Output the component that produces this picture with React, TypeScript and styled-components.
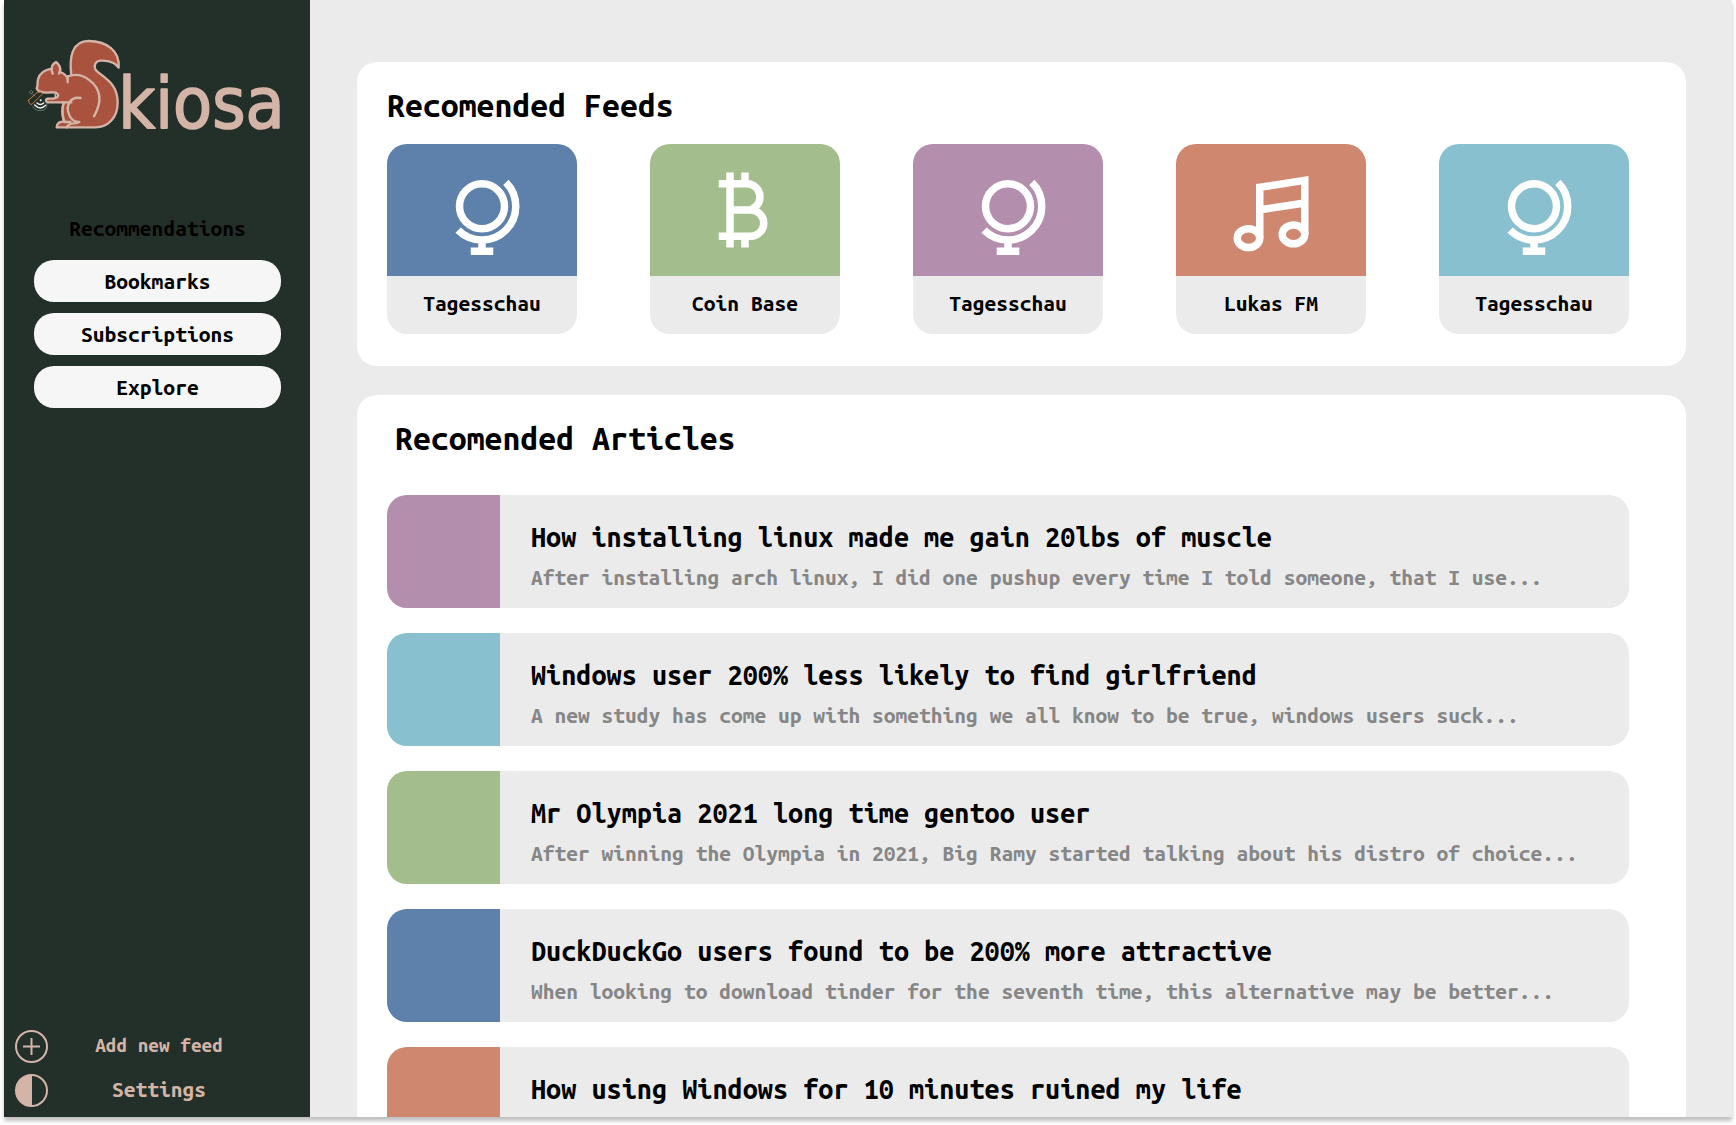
import React from "react";
import styled, { createGlobalStyle } from "styled-components";

const color = {
  sidebar: "#23302a",
  blush: "#d5b4a8",
  rust: "#a9533f",
  surface: "#ebebeb",
  blue: "#5e81ac",
  green: "#a3be8c",
  purple: "#b48ead",
  orange: "#d08770",
  cyan: "#88c0d0",
};

const GlobalStyle = createGlobalStyle`
  *, *::before, *::after { box-sizing: border-box; }
  body {
    margin: 0;
    background: #fff;
    color: #000;
    font-family: "Ubuntu Mono", "DejaVu Sans Mono", monospace;
    font-weight: 700;
  }
  a { color: inherit; text-decoration: none; }
`;

const Frame = styled.div`
  display: flex;
  height: calc(100vh - 8px);
  margin: 0 4px 8px;
  background: ${color.surface};
  box-shadow: 0 4px 4px rgba(0, 0, 0, 0.25);
  overflow: hidden;
`;

const Sidebar = styled.aside`
  display: flex;
  flex: 0 0 306px;
  flex-direction: column;
  padding: 30px 0 5px;
  background: ${color.sidebar};
`;

const LogoLink = styled.a`
  display: block;
  height: 120px;
  padding-left: 16px;
`;

const Nav = styled.nav`
  display: flex;
  flex-direction: column;
  gap: 11px;
  margin-top: 57px;
  padding: 0 29px 0 30px;
`;

const NavButton = styled.button<{ $current?: boolean }>`
  height: 42px;
  padding: 0;
  border: 0;
  border-radius: 20px;
  background: ${(p) => (p.$current ? "transparent" : "#f6f6f6")};
  color: #000;
  font: inherit;
  font-size: 21px;
  cursor: pointer;
`;

const Tools = styled.div`
  display: flex;
  flex-direction: column;
  margin-top: auto;
`;

const ToolButton = styled.button<{ $size: number }>`
  display: flex;
  align-items: center;
  height: 44px;
  padding: 0 38px 0 11px;
  border: 0;
  background: none;
  color: ${color.blush};
  font: inherit;
  font-size: ${(p) => p.$size}px;
  cursor: pointer;
`;

const ToolLabel = styled.span`
  flex: 1;
  padding: 0 2px 2px 0;
  text-align: center;
`;

const Main = styled.main`
  display: flex;
  flex: 1;
  flex-direction: column;
  gap: 29px;
  min-width: 0;
  padding: 62px 46px 0 47px;
  overflow: hidden;
`;

const Panel = styled.section`
  flex-shrink: 0;
  padding: 23px 57px 32px 30px;
  border-radius: 20px;
  background: #fff;
`;

const PanelTitle = styled.h2<{ $indent?: number; $gap: number }>`
  margin: 0 0 ${(p) => p.$gap}px;
  padding-left: ${(p) => p.$indent ?? 0}px;
  font-size: 32px;
  line-height: 40px;
`;

const FeedRow = styled.div`
  display: flex;
  justify-content: space-between;
`;

const FeedCard = styled.a`
  width: 190px;
  border-radius: 20px;
  background: ${color.surface};
  overflow: hidden;
`;

const FeedCover = styled.div<{ $tint: string }>`
  display: flex;
  align-items: center;
  justify-content: center;
  height: 132px;
  background: ${(p) => p.$tint};
  color: #fff;
`;

const FeedName = styled.div`
  height: 58px;
  font-size: 21px;
  line-height: 54px;
  text-align: center;
`;

const ArticleList = styled.div`
  display: flex;
  flex-direction: column;
  gap: 25px;
`;

const ArticleCard = styled.a`
  display: flex;
  height: 113px;
  border-radius: 20px;
  background: ${color.surface};
  overflow: hidden;
`;

const ArticleSwatch = styled.div<{ $tint: string }>`
  flex: 0 0 113px;
  background: ${(p) => p.$tint};
`;

const ArticleText = styled.div`
  min-width: 0;
  padding: 26px 0 0 31px;
  white-space: nowrap;
`;

const ArticleTitle = styled.h3`
  margin: 0 0 10px;
  font-size: 27px;
  line-height: 32px;
`;

const ArticleTeaser = styled.p`
  margin: 0;
  color: #868686;
  font-size: 21px;
  line-height: 28px;
`;

const Wordmark = styled.text`
  fill: ${color.blush};
  stroke: ${color.blush};
  stroke-width: 5px;
  stroke-linejoin: round;
  font-family: "DejaVu Sans Condensed", "DejaVu Sans", sans-serif;
  font-size: 213px;
  font-weight: 400;
`;

function Logo() {
  return (
    <svg width="280" height="120" viewBox="0 0 840 360" role="img" aria-label="Skiosa">
      <g stroke={color.blush} strokeWidth="7" strokeLinecap="round" strokeLinejoin="round" fill={color.rust}>
        <path d="M154 136C147 80 157 33 206 33C258 33 300 62 296 113C284 94 264 91 242 92C222 94 221 112 229 122C254 145 293 160 293 218C293 264 263 292 226 292H110C111 279 119 274 132 275C124 252 126 235 131 217H84C76 215 76 207 84 206H97C111 206 117 199 113 192C106 184 94 186 82 188C67 188 52 184 50 175C55 166 51 158 54 148C59 129 76 119 95 116C95 106 101 100 108 96C117 103 123 115 120 126C131 130 140 138 143 146" />
        <path fill="none" d="M143 157V139C168 130 192 137 209 151C244 178 246 216 222 259" />
        <path fill="none" d="M182 204C148 198 137 231 147 253C153 270 166 276 178 276C165 284 148 274 140 292M131 217H154M131 217C125 237 127 262 134 276H151" />
        <path fill="none" d="M98 131C95 126 95 120 95 116M117 131C119 125 121 120 120 116" />
      </g>
      <path d="M104 192C109 197 107 203 99 206" fill={color.sidebar} stroke={color.blush} strokeWidth="5" />
      <g fill="none" strokeLinecap="round">
        <path d="M26 210L52 187Q61 185 69 190L36 223Q25 224 26 210Z" fill={color.sidebar} stroke="#c9783c" strokeWidth="3" />
        <path d="M39 230Q45 242 61 242Q78 241 80 230V219" stroke="#87938e" strokeWidth="2" />
        <path d="M44 225Q61 242 77 226M51 219Q61 228 71 219" stroke="#f4f4ef" strokeWidth="4" />
        <circle cx="62" cy="211" r="3" fill="#f4f4ef" />
        <path d="M29 186L34 181L39 186L34 191ZM37 191L44 198" stroke="#87938e" strokeWidth="2" />
      </g>
      <Wordmark x="295" y="294">kiosa</Wordmark>
    </svg>
  );
}

function GlobeIcon() {
  return (
    <svg width="90" height="90" viewBox="0 0 24 24" fill="none" stroke="currentColor" strokeWidth="2" aria-hidden="true">
      <circle cx="12" cy="11" r="6" />
      <path d="M18.364 4.636A9 9 0 0 1 5.636 17.364" />
      <path d="M12 20v2M9 23h6" />
    </svg>
  );
}

function BitcoinIcon() {
  return (
    <svg width="90" height="90" viewBox="0 0 24 24" fill="none" stroke="currentColor" strokeWidth="2" aria-hidden="true">
      <path d="M5 5h7.5a3.5 3.5 0 0 1 0 7H8M12.5 12h1a3.5 3.5 0 0 1 0 7H5M8 2v20M12 2v3M12 19v3" />
    </svg>
  );
}

function MusicIcon() {
  return (
    <svg width="90" height="90" viewBox="0 0 24 24" fill="none" stroke="currentColor" strokeWidth="2" aria-hidden="true">
      <ellipse cx="6" cy="19.5" rx="3" ry="2.5" />
      <ellipse cx="18" cy="18.5" rx="3" ry="2.5" />
      <path d="M9 19.5V5.95L21 4.1V18.5M9 11.95L21 10.15" />
    </svg>
  );
}

function PlusIcon() {
  return (
    <svg width="33" height="33" viewBox="0 0 33 33" fill="none" stroke="currentColor" strokeWidth="2" aria-hidden="true">
      <circle cx="16.5" cy="16.5" r="15.5" />
      <path d="M16.5 8v17M8 16.5h17" />
    </svg>
  );
}

function ContrastIcon() {
  return (
    <svg width="33" height="33" viewBox="0 0 33 33" fill="none" stroke="currentColor" strokeWidth="2" aria-hidden="true">
      <circle cx="16.5" cy="16.5" r="15.5" />
      <path d="M17 1A15.5 15.5 0 0 0 17 32Z" fill="currentColor" stroke="none" />
    </svg>
  );
}

const feeds = [
  { name: "Tagesschau", tint: color.blue, Icon: GlobeIcon },
  { name: "Coin Base", tint: color.green, Icon: BitcoinIcon },
  { name: "Tagesschau", tint: color.purple, Icon: GlobeIcon },
  { name: "Lukas FM", tint: color.orange, Icon: MusicIcon },
  { name: "Tagesschau", tint: color.cyan, Icon: GlobeIcon },
];

const articles = [
  {
    title: "How installing linux made me gain 20lbs of muscle",
    teaser: "After installing arch linux, I did one pushup every time I told someone, that I use...",
    tint: color.purple,
  },
  {
    title: "Windows user 200% less likely to find girlfriend",
    teaser: "A new study has come up with something we all know to be true, windows users suck...",
    tint: color.cyan,
  },
  {
    title: "Mr Olympia 2021 long time gentoo user",
    teaser: "After winning the Olympia in 2021, Big Ramy started talking about his distro of choice...",
    tint: color.green,
  },
  {
    title: "DuckDuckGo users found to be 200% more attractive",
    teaser: "When looking to download tinder for the seventh time, this alternative may be better...",
    tint: color.blue,
  },
  {
    title: "How using Windows for 10 minutes ruined my life",
    teaser: "",
    tint: color.orange,
  },
];

export default function App() {
  return (
    <>
      <GlobalStyle />
      <Frame>
        <Sidebar>
          <LogoLink href="#home">
            <Logo />
          </LogoLink>
          <Nav>
            <NavButton $current aria-current="page">Recommendations</NavButton>
            <NavButton>Bookmarks</NavButton>
            <NavButton>Subscriptions</NavButton>
            <NavButton>Explore</NavButton>
          </Nav>
          <Tools>
            <ToolButton $size={19}>
              <PlusIcon />
              <ToolLabel>Add new feed</ToolLabel>
            </ToolButton>
            <ToolButton $size={21}>
              <ContrastIcon />
              <ToolLabel>Settings</ToolLabel>
            </ToolButton>
          </Tools>
        </Sidebar>
        <Main>
          <Panel>
            <PanelTitle $gap={19}>Recomended Feeds</PanelTitle>
            <FeedRow>
              {feeds.map(({ name, tint, Icon }, i) => (
                <FeedCard key={i} href="#feed">
                  <FeedCover $tint={tint}>
                    <Icon />
                  </FeedCover>
                  <FeedName>{name}</FeedName>
                </FeedCard>
              ))}
            </FeedRow>
          </Panel>
          <Panel>
            <PanelTitle $gap={37} $indent={8}>Recomended Articles</PanelTitle>
            <ArticleList>
              {articles.map((a) => (
                <ArticleCard key={a.title} href="#article">
                  <ArticleSwatch $tint={a.tint} />
                  <ArticleText>
                    <ArticleTitle>{a.title}</ArticleTitle>
                    {a.teaser && <ArticleTeaser>{a.teaser}</ArticleTeaser>}
                  </ArticleText>
                </ArticleCard>
              ))}
            </ArticleList>
          </Panel>
        </Main>
      </Frame>
    </>
  );
}
